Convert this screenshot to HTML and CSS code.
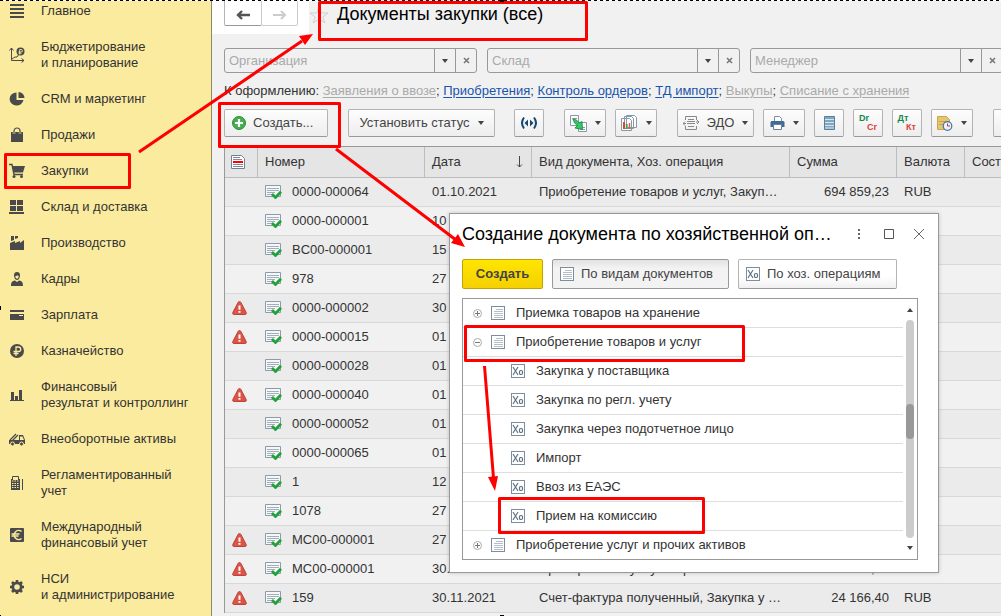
FILE: index.html
```html
<!DOCTYPE html>
<html lang="ru">
<head>
<meta charset="utf-8">
<title>Документы закупки (все)</title>
<link rel="stylesheet" href="styles.css">
</head>
<body>
<svg class="defs" aria-hidden="true">
  <symbol id="doc" viewBox="0 0 14 14"><rect x=".5" y=".5" width="13" height="13" fill="#fff" stroke="#7e8d9c"/><path d="M5 3.500h7M3 5.500h9M3 7.500h9M3 9.500h9M3 11.500h9" stroke="#b3bec8"/></symbol>
  <symbol id="xo" viewBox="0 0 14 14"><rect x=".5" y=".5" width="13" height="13" fill="#fff" stroke="#7e8d9c"/><path d="M2 3l5 8M7 3l-5 8" stroke="#5d7387" stroke-width="1.200"/><rect x="8.500" y="6.500" width="3" height="4" rx="1.200" fill="none" stroke="#5d7387" stroke-width="1.200"/></symbol>
  <symbol id="posted" viewBox="0 0 17 14"><path d="M.5.500h15v11H.5z" fill="#f5f7f8" stroke="#8a9bab"/><path d="M2 3.500h12M2 5.500h12M2 7.500h8M2 9.500h5" stroke="#a3aeb8"/><path d="M7 9l3.500 3.500L16 6.800" fill="none" stroke="#22a03a" stroke-width="2.800"/></symbol>
  <symbol id="warn" viewBox="0 0 15 14"><path d="M7.500.5c.9 0 1.300.7 1.700 1.500l5 9.500c.5 1.200 0 2-1 2H1.800c-1 0-1.500-.8-1-2L5.800 2C6.200 1.200 6.600.5 7.500.5z" fill="#dd5346" stroke="#b9463c"/><path d="M7.500 4.500v4.300M7.500 10v1.800" stroke="#fff" stroke-width="2"/></symbol>
  <symbol id="plus" viewBox="0 0 9 9"><circle cx="4.500" cy="4.500" r="4" fill="#fff" stroke="#aaa"/><path d="M2 4.500h5M4.500 2v5" stroke="#777"/></symbol>
  <symbol id="minus" viewBox="0 0 9 9"><circle cx="4.500" cy="4.500" r="4" fill="#fff" stroke="#aaa"/><path d="M2 4.500h5" stroke="#777"/></symbol>
  <symbol id="drop" viewBox="0 0 6 4"><path d="M0 0h6L3 4z" fill="#444"/></symbol>
  <symbol id="cross" viewBox="0 0 7 7"><path d="M1 1l5 5M6 1L1 6" stroke="#777" stroke-width="1.600"/></symbol>
</svg>

<div class="app">
<nav class="sidebar">
  <a href="#"><svg viewBox="0 0 16 16"><path d="M1 2h14M1 6h14M1 10h14M1 14h14" stroke="#4a4a4a" stroke-width="2"/></svg><span>Главное</span></a>
  <a href="#"><svg viewBox="0 0 16 16"><path d="M2.500 1v12.500H15M.5 3.500l2-2.500 2 2.500M12.500 11.500l2.500 2-2.500 2M3 12l3-2 2 0 2-3" fill="none" stroke="#4a4a4a"/><circle cx="11.500" cy="4.500" r="4" fill="#4a4a4a"/><path d="M10.700 7.500V2.500h1.500a1.200 1.200 0 010 2.500H9.500M9.500 6.200h3" fill="none" stroke="#fbeb9e" stroke-width=".9"/></svg><span>Бюджетирование<br>и планирование</span></a>
  <a href="#"><svg viewBox="0 0 16 16"><path d="M7.500 1.500V9h7a7 6.500 0 11-7-7.500z" fill="#4a4a4a"/><path d="M9.500 1v6h6a6 6 0 00-6-6z" fill="#4a4a4a"/></svg><span>CRM и маркетинг</span></a>
  <a href="#"><svg viewBox="0 0 16 16"><path d="M2 5h12v10H2z" fill="#4a4a4a"/><path d="M5 7V4a3 3 0 016 0v3" fill="none" stroke="#fbeb9e" stroke-width="2.400"/><path d="M5 7V4a3 3 0 016 0v3" fill="none" stroke="#4a4a4a" stroke-width="1.200"/></svg><span>Продажи</span></a>
  <a href="#"><svg viewBox="0 0 16 16"><path d="M0 1.500h3L5 11.500h9" fill="none" stroke="#4a4a4a" stroke-width="1.400"/><path d="M3 3h13l-2 6.500H4.500z" fill="#4a4a4a"/><circle cx="5" cy="13.500" r="1.500" fill="#4a4a4a"/><circle cx="12.500" cy="13.500" r="1.500" fill="#4a4a4a"/></svg><span>Закупки</span></a>
  <a href="#"><svg viewBox="0 0 16 16"><path d="M1 1h6v5H1zM8 1h6v5H8zM1 7h6v5H1zM8 7h6v5H8zM0 13h15v2H0z" fill="#4a4a4a"/></svg><span>Склад и доставка</span></a>
  <a href="#"><svg viewBox="0 0 16 16"><path d="M1 15V8l5-2v2l5-2v2l4-3v10zM2 1h3v4L2 6zM6 1h3v2L6 4z" fill="#4a4a4a"/></svg><span>Производство</span></a>
  <a href="#"><svg viewBox="0 0 16 16"><path d="M2 15c0-4 1-5 4-5.500L8 11l2-1.500c3 .5 4 1.500 4 5.500z" fill="#4a4a4a"/><path d="M5 4.500C5 2 6 1 8 1s3 1 3 3.500S9.500 9 8 9 5 7 5 4.500z" fill="#4a4a4a"/><path d="M6.300 5c1 0 2-.3 2.400-.8.3.5.6.8 1 .8 0 1.500-.7 2.800-1.700 2.800S6.300 6.500 6.300 5z" fill="#fbeb9e"/></svg><span>Кадры</span></a>
  <a href="#"><svg viewBox="0 0 16 16"><path d="M1 3h14v2H1zM1 7h14v6H1z" fill="#4a4a4a"/><path d="M10 8.500h4" stroke="#fbeb9e"/></svg><span>Зарплата</span></a>
  <a href="#"><svg viewBox="0 0 16 16"><circle cx="8" cy="8" r="7" fill="#4a4a4a"/><path d="M7 13V4h2.500a2.200 2.200 0 010 4.500H4.500M4.500 10.500h5" fill="none" stroke="#fbeb9e" stroke-width="1.300"/></svg><span>Казначейство</span></a>
  <a href="#"><svg viewBox="0 0 16 16"><path d="M2 5h3v8H2zM6 9h3v4H6zM10 3h3v10h-3zM1 13h14v1H1z" fill="#4a4a4a"/></svg><span>Финансовый<br>результат и контроллинг</span></a>
  <a href="#"><svg viewBox="0 0 16 16"><path d="M0 9h10V4h4l2 5v4H0z" fill="#4a4a4a"/><path d="M11 5.500h2.500L15 9h-4z" fill="#fbeb9e"/><path d="M1 9l6-6M3 10l6-6" stroke="#4a4a4a" stroke-width="1.300"/><circle cx="3.500" cy="13" r="2" fill="#4a4a4a" stroke="#fbeb9e"/><circle cx="12.500" cy="13" r="2" fill="#4a4a4a" stroke="#fbeb9e"/></svg><span>Внеоборотные активы</span></a>
  <a href="#"><svg viewBox="0 0 16 16"><path d="M2 4h9v11H2zM13 4h1v11h-1z" fill="#4a4a4a"/><path d="M3.500 5V1.500h6V5" fill="#fbeb9e" stroke="#4a4a4a"/><path d="M3 6h7M3 8.500h7M3 10.500h7M3 12.500h7" stroke="#fbeb9e" stroke-dasharray="1.500 1"/></svg><span>Регламентированный<br>учет</span></a>
  <a href="#"><svg viewBox="0 0 16 16"><rect x="1" y="1" width="14" height="14" rx="1" fill="#4a4a4a"/><path d="M12.500 4.500a4.500 4.500 0 100 7M2.500 7h8M2.500 9h7" fill="none" stroke="#fbeb9e" stroke-width="1.500"/></svg><span>Международный<br>финансовый учет</span></a>
  <a href="#"><svg viewBox="0 0 16 16"><circle cx="8" cy="8" r="4.200" fill="none" stroke="#4a4a4a" stroke-width="2.800"/><path d="M8 1v2M8 13v2M1 8h2M13 8h2M3 3l1.500 1.500M11.500 11.500L13 13M13 3l-1.500 1.500M4.500 11.500L3 13" stroke="#4a4a4a" stroke-width="2.600"/></svg><span>НСИ<br>и администрирование</span></a>
</nav>

<main class="main">
  <header class="head">
    <div class="history">
      <button type="button" aria-label="Назад"><svg width="14" height="10" viewBox="0 0 14 10"><path d="M14 5H3M6 1L2 5l4 4" fill="none" stroke="#555" stroke-width="2.400"/></svg></button>
      <button type="button" aria-label="Вперед"><svg width="14" height="10" viewBox="0 0 14 10"><path d="M0 5h11M8 1l4 4-4 4" fill="none" stroke="#ccc" stroke-width="2"/></svg></button>
    </div>
    <svg class="star" viewBox="0 0 20 18"><path d="M10 1l2.300 6H19l-5.300 4L16 17l-6-4-6 4 2.300-6L1 7h6.700z" fill="none" stroke="#d0d0d0"/></svg>
    <h1>Документы закупки (все)</h1>
  </header>

  <div class="filters">
    <div class="combo"><input type="text" placeholder="Организация" aria-label="Организация"><button type="button" aria-label="Выбрать"><svg width="6" height="4"><use href="#drop"/></svg></button><button type="button" aria-label="Очистить"><svg width="7" height="7"><use href="#cross"/></svg></button></div>
    <div class="combo"><input type="text" placeholder="Склад" aria-label="Склад"><button type="button" aria-label="Выбрать"><svg width="6" height="4"><use href="#drop"/></svg></button><button type="button" aria-label="Очистить"><svg width="7" height="7"><use href="#cross"/></svg></button></div>
    <div class="combo"><input type="text" placeholder="Менеджер" aria-label="Менеджер"><button type="button" aria-label="Выбрать"><svg width="6" height="4"><use href="#drop"/></svg></button><button type="button" aria-label="Очистить"><svg width="7" height="7"><use href="#cross"/></svg></button></div>
  </div>

  <p class="links">К оформлению: <a class="off" href="#">Заявления о ввозе</a>; <a href="#">Приобретения</a>; <a href="#">Контроль ордеров</a>; <a href="#">ТД импорт</a>; <a class="off" href="#">Выкупы</a>; <a class="off" href="#">Списание с хранения</a></p>

  <div class="toolbar">
    <button type="button" class="btn create"><svg width="14" height="14" viewBox="0 0 14 14"><circle cx="7" cy="7" r="6.500" fill="#45b050" stroke="#2c8d3b"/><path d="M3 7h8M7 3v8" stroke="#fff" stroke-width="2.200"/></svg>Создать...</button>
    <button type="button" class="btn status">Установить статус<svg width="6" height="4"><use href="#drop"/></svg></button>
    <button type="button" class="btn icon" aria-label="Связи"><svg width="16" height="14" viewBox="0 0 16 14"><path d="M3 1.500q-4 5.500 0 11M13 1.500q4 5.500 0 11" fill="none" stroke="#17496f" stroke-width="2"/><path d="M7 3.500v7L3.500 7zM9 3.500v7L12.500 7z" fill="#17496f"/></svg></button>
    <button type="button" class="btn pair start" aria-label="Создать на основании"><svg width="17" height="17" viewBox="0 0 17 17"><path d="M.5.500h8v10h-8zM8.500 7.500h8v9h-8z" fill="#fff" stroke="#8899a8"/><path d="M2 3.500h5M10 12.500h5M10 14.500h5" stroke="#8899a8"/><path d="M3 4l3.500 1L9 8l3-1.500.5 8L5 13l2.500-2.500L4.500 8z" fill="#2fcb62" stroke="#16823a" stroke-width=".8"/></svg><svg width="6" height="4"><use href="#drop"/></svg></button>
    <button type="button" class="btn pair" aria-label="Отчеты"><svg width="17" height="16" viewBox="0 0 17 16"><path d="M5.500.5h8l2 2v10h-10zM3.500 1.500h7l2 2v10h-9zM.5 3.500h8l2 2v10H.5z" fill="#fff" stroke="#8297a8"/><path d="M3 7v7" stroke="#d43" stroke-width="2"/><path d="M5.700 9v5" stroke="#3a6" stroke-width="2"/><path d="M8.500 8v6" stroke="#e54" stroke-width="1.500"/></svg><svg width="6" height="4"><use href="#drop"/></svg></button>
    <button type="button" class="btn edo start"><svg width="16" height="14" viewBox="0 0 16 14"><path d="M2.500 4V.5h11V4M2.500 10v3.500h11V10M5 3.500h6M4 5.500h8M4 7.500h8M5 10.500h6M0 7.500h3M13 6h3M14 4l2 2-2 2M2 5.500l-2 2 2 2" fill="none" stroke="#888"/></svg>ЭДО<svg width="6" height="4"><use href="#drop"/></svg></button>
    <button type="button" class="btn pair" aria-label="Печать"><svg width="15" height="14" viewBox="0 0 15 14"><path d="M4.500.5h5l2 2V6h-7z" fill="#fff" stroke="#7890a5"/><path d="M1.500 5h12l1 1v5H.5V6z" fill="#3f6d92"/><path d="M3.500 8.500h8v5h-8z" fill="#fff" stroke="#6a8299"/></svg><svg width="6" height="4"><use href="#drop"/></svg></button>
    <button type="button" class="btn icon" aria-label="Список"><svg width="11" height="14" viewBox="0 0 11 14"><path d="M.5.500h10v13H.5z" fill="#83a7c1" stroke="#58809d"/><path d="M1 3.500h9M1 6.500h9M1 9.500h9M1 12h9" stroke="#d5e3ed"/></svg></button>
    <button type="button" class="btn icon pairtext" aria-label="Dr Cr"><b>Dr</b><i>Cr</i></button>
    <button type="button" class="btn icon pairtext" aria-label="Дт Кт"><b>Дт</b><i>Кт</i></button>
    <button type="button" class="btn pair" aria-label="Напоминание"><svg width="16" height="15" viewBox="0 0 16 15"><path d="M.5.500h9l3 3v10H.5z" fill="#e6c56f" stroke="#cba64c"/><path d="M2 5.500h8M2 8.500h5" stroke="#c6a04b"/><circle cx="10.500" cy="10" r="4.300" fill="#e9f1fa" stroke="#4275a8" stroke-width="1.200"/><path d="M10.500 7.500V10H13" fill="none" stroke="#c33"/></svg><svg width="6" height="4"><use href="#drop"/></svg></button>
    <button type="button" class="btn icon start" aria-label="Еще"></button>
  </div>

  <div class="grid">
  <table>
    <colgroup><col class="c-flag"><col class="c-num"><col class="c-date"><col class="c-kind"><col class="c-sum"><col class="c-cur"><col></colgroup>
    <thead><tr>
      <th><svg width="14" height="14" viewBox="0 0 14 14"><path d="M.5.500h10l3 3v10H.5z" fill="#fff" stroke="#6e8294"/><path d="M2 2.500h7M2 4.500h9M2 9.500h10M2 11.500h10" stroke="#7c8c99"/><path d="M2 7h10" stroke="#f00" stroke-width="2"/></svg></th>
      <th>Номер</th>
      <th><span class="sorted">Дата<svg width="7" height="12" viewBox="0 0 7 12"><path d="M3.500 0v11M1 8.500l2.500 2.500L6 8.500" fill="none" stroke="#444"/></svg></span></th>
      <th>Вид документа, Хоз. операция</th><th>Сумма</th><th>Валюта</th><th>Сост</th>
    </tr></thead>
    <tbody>
      <tr><td></td><td><span class="num"><svg class="mark"><use href="#posted"/></svg>0000-000064</span></td><td>01.10.2021</td><td>Приобретение товаров и услуг, Закуп…</td><td>694 859,23</td><td>RUB</td><td></td></tr>
      <tr><td></td><td><span class="num"><svg class="mark"><use href="#posted"/></svg>0000-000001</span></td><td>10</td><td></td><td></td><td></td><td></td></tr>
      <tr><td></td><td><span class="num"><svg class="mark"><use href="#posted"/></svg>BC00-000001</span></td><td>15</td><td></td><td></td><td></td><td></td></tr>
      <tr><td></td><td><span class="num"><svg class="mark"><use href="#posted"/></svg>978</span></td><td>27</td><td></td><td></td><td></td><td></td></tr>
      <tr><td><svg class="warn"><use href="#warn"/></svg></td><td><span class="num"><svg class="mark"><use href="#posted"/></svg>0000-000002</span></td><td>30</td><td></td><td></td><td></td><td></td></tr>
      <tr><td><svg class="warn"><use href="#warn"/></svg></td><td><span class="num"><svg class="mark"><use href="#posted"/></svg>0000-000015</span></td><td>01</td><td></td><td></td><td></td><td></td></tr>
      <tr><td></td><td><span class="num"><svg class="mark"><use href="#posted"/></svg>0000-000028</span></td><td>01</td><td></td><td></td><td></td><td></td></tr>
      <tr><td><svg class="warn"><use href="#warn"/></svg></td><td><span class="num"><svg class="mark"><use href="#posted"/></svg>0000-000040</span></td><td>01</td><td></td><td></td><td></td><td></td></tr>
      <tr><td></td><td><span class="num"><svg class="mark"><use href="#posted"/></svg>0000-000052</span></td><td>01</td><td></td><td></td><td></td><td></td></tr>
      <tr><td></td><td><span class="num"><svg class="mark"><use href="#posted"/></svg>0000-000065</span></td><td>01</td><td></td><td></td><td></td><td></td></tr>
      <tr><td></td><td><span class="num"><svg class="mark"><use href="#posted"/></svg>1</span></td><td>12</td><td></td><td></td><td></td><td></td></tr>
      <tr><td></td><td><span class="num"><svg class="mark"><use href="#posted"/></svg>1078</span></td><td>27</td><td></td><td></td><td></td><td></td></tr>
      <tr><td><svg class="warn"><use href="#warn"/></svg></td><td><span class="num"><svg class="mark"><use href="#posted"/></svg>МС00-000001</span></td><td>27</td><td></td><td></td><td></td><td></td></tr>
      <tr><td><svg class="warn"><use href="#warn"/></svg></td><td><span class="num"><svg class="mark"><use href="#posted"/></svg>МС00-000001</span></td><td>30.11.2021</td><td>Приобретение услуг и прочих активо…</td><td>2 800,00</td><td>RUB</td><td></td></tr>
      <tr><td><svg class="warn"><use href="#warn"/></svg></td><td><span class="num"><svg class="mark"><use href="#posted"/></svg>159</span></td><td>30.11.2021</td><td>Счет-фактура полученный, Закупка у …</td><td>24 166,40</td><td>RUB</td><td></td></tr>
    </tbody>
  </table>
  </div>

  <section class="dialog" role="dialog" aria-labelledby="dlg-title">
    <div class="dialog-head">
      <h2 id="dlg-title">Создание документа по хозяйственной оп…</h2>
      <button type="button" aria-label="Меню"><svg width="10" height="10" viewBox="0 0 10 10"><path d="M4 0h2v2H4zM4 4h2v2H4zM4 8h2v2H4z" fill="#666"/></svg></button>
      <button type="button" aria-label="Развернуть"><svg width="10" height="10" viewBox="0 0 10 10"><path d="M.5.500h9v9h-9z" fill="none" stroke="#555"/></svg></button>
      <button type="button" aria-label="Закрыть"><svg width="10" height="10" viewBox="0 0 10 10"><path d="M0 0l10 10M10 0L0 10" stroke="#666"/></svg></button>
    </div>
    <div class="dialog-bar">
      <button type="button" class="btn primary">Создать</button>
      <button type="button" class="btn pressed"><svg width="14" height="14"><use href="#doc"/></svg>По видам документов</button>
      <button type="button" class="btn byop"><svg width="14" height="14"><use href="#xo"/></svg>По хоз. операциям</button>
    </div>
    <div class="tree">
      <ul>
        <li><svg class="knob"><use href="#plus"/></svg><svg class="ico"><use href="#doc"/></svg>Приемка товаров на хранение</li>
        <li><svg class="knob"><use href="#minus"/></svg><svg class="ico"><use href="#doc"/></svg>Приобретение товаров и услуг</li>
        <li class="sub"><svg class="ico"><use href="#xo"/></svg>Закупка у поставщика</li>
        <li class="sub"><svg class="ico"><use href="#xo"/></svg>Закупка по регл. учету</li>
        <li class="sub"><svg class="ico"><use href="#xo"/></svg>Закупка через подотчетное лицо</li>
        <li class="sub"><svg class="ico"><use href="#xo"/></svg>Импорт</li>
        <li class="sub"><svg class="ico"><use href="#xo"/></svg>Ввоз из ЕАЭС</li>
        <li class="sub"><svg class="ico"><use href="#xo"/></svg>Прием на комиссию</li>
        <li><svg class="knob"><use href="#plus"/></svg><svg class="ico"><use href="#doc"/></svg>Приобретение услуг и прочих активов</li>
      </ul>
      <div class="scroll">
        <svg width="6" height="4" viewBox="0 0 6 4"><path d="M0 4h6L3 0z" fill="#444"/></svg>
        <div class="track"><div class="thumb"></div></div>
        <svg width="6" height="4"><use href="#drop"/></svg>
      </div>
    </div>
  </section>
</main>
</div>

<svg class="notes" aria-hidden="true">
  <path d="M0 .5h1001" stroke="#fff"/>
  <path d="M0 .5h1001" stroke="#000" stroke-dasharray="3 3"/>
  <g fill="none" stroke="#f00" stroke-width="3" stroke-linejoin="round">
    <rect x="5.500" y="154.500" width="124" height="33"/>
    <rect x="319.500" y="2.500" width="267" height="37"/>
    <rect x="219.500" y="103.500" width="120" height="43"/>
    <rect x="465.500" y="326.500" width="278" height="34"/>
    <rect x="499.500" y="498.500" width="204" height="34"/>
  </g>
  <path d="M139 152L302 41M336 149l120 91M484.500 366l9 112" fill="none" stroke="#f00" stroke-width="3"/>
  <path d="M313 34l-8 11-6-9zM465 247l-14-4 7-9zM495 491l-7-14 10-1z" fill="#f00"/>
  <path d="M500 0h4v2h-4zM0 306h1v4H0zM500 615h4v1h-4zM0 615h1v1H0z"/>
</svg>
</body>
</html>
```
FILE: styles.css
```css
* { box-sizing: border-box; }

body {
  margin: 0;
  overflow: hidden;
  background: #f1f1f1;
  color: #333;
  font: 13px/16px "Liberation Sans", Arial, sans-serif;
}

button, input { font: inherit; color: inherit; margin: 0; }
button { cursor: pointer; }
svg { flex: none; }
.defs { position: absolute; width: 0; height: 0; }

.app { display: flex; height: 100vh; overflow: hidden; }

.sidebar {
  flex: none;
  width: 212px;
  overflow: hidden;
  background: #fbeb9e;
  border-right: 1px solid #8f8a62;
}
.sidebar a {
  display: flex;
  align-items: center;
  gap: 16px;
  padding: 10px 8px 10px 9px;
  color: #333;
  text-decoration: none;
  white-space: nowrap;
}
.sidebar a:first-child { padding-top: 3px; }
.sidebar svg { width: 16px; height: 16px; }

.main {
  position: relative;
  flex: 1;
  min-width: 0;
  overflow: hidden;
}

.head { display: flex; height: 34px; }
.history {
  display: flex;
  align-items: flex-start;
  width: 97px;
  padding-left: 12px;
  background: #fff;
}
.history button {
  display: flex;
  align-items: center;
  justify-content: center;
  width: 38px;
  height: 26px;
  padding: 4px 0 0;
  background: #fff;
  border: 1px solid #b5b5b5;
  border-bottom-color: #999;
  border-radius: 0 0 2px 2px;
}
.history button + button { width: 37px; margin-left: -1px; border-color: #ccc; }
.star { width: 20px; height: 18px; margin: 6px 8px 0 0; }
h1, h2 { margin: 0; color: #000; font-weight: normal; font-size: 18px; line-height: 24px; white-space: nowrap; }
h1 { padding-top: 2px; }

.filters { display: flex; gap: 10px; padding: 14px 0 0 12px; }
.combo {
  display: flex;
  flex: none;
  width: 253px;
  height: 25px;
  border: 1px solid #999;
  border-radius: 3px;
}
.combo input {
  flex: 1;
  min-width: 0;
  padding: 0 4px;
  border: 0;
  background: none;
}
.combo input::placeholder { color: #aaa; opacity: 1; }
.combo button {
  display: flex;
  align-items: center;
  justify-content: center;
  width: 21px;
  padding: 0;
  border: 0;
  border-left: 1px solid #999;
  background: none;
}

.links { margin: 0; padding: 10px 0 10px 12px; white-space: nowrap; }
.links a { color: #1a54ad; text-underline-offset: 2px; }
.links .off { color: #aaa; }

.toolbar { display: flex; gap: 9px; padding: 0 0 9px 12px; }
.btn {
  display: flex;
  flex: none;
  align-items: center;
  justify-content: center;
  gap: 8px;
  height: 28px;
  padding: 0;
  color: #444;
  background: linear-gradient(#fdfdfd, #ededed);
  border: 1px solid #b3b3b3;
  border-bottom-color: #999;
  border-radius: 2px;
  white-space: nowrap;
}
.create, .pressed, .byop { justify-content: flex-start; gap: 7px; padding: 0 7px; }
.create { width: 104px; }
.status { width: 147px; margin: 0 10px 0 11px; }
.icon { width: 30px; }
.pair { width: 42px; }
.edo { width: 77px; }
.start { margin-left: 11px; }
.pairtext {
  flex-direction: column;
  gap: 0;
  font-size: 9px;
  line-height: 9px;
}
.pairtext b { padding-right: 8px; color: #12894a; }
.pairtext i { padding-left: 8px; color: #d9413c; font-style: normal; font-weight: bold; }

.grid { margin-left: 12px; border-top: 1px solid #999; border-left: 1px solid #999; }
table { width: 100%; table-layout: fixed; border-collapse: separate; border-spacing: 0; }
.c-flag { width: 33px; }
.c-num { width: 167px; }
.c-date { width: 107px; }
.c-kind { width: 258px; }
.c-sum { width: 107px; }
.c-cur { width: 68px; }
th, td {
  padding: 0 8px 0 7px;
  text-align: left;
  font-weight: normal;
  white-space: nowrap;
}
th {
  height: 31px;
  background: #e5e5e5;
  border-right: 1px solid #bdbdbd;
  border-bottom: 1px solid #bdbdbd;
}
th:last-child { padding-right: 0; border-right: 0; }
td { height: 29px; border-bottom: 1px solid #d8d8d8; }
tbody tr:nth-child(odd) { background: #ebebeb; }
th svg, td svg { display: block; }
th:first-child { padding-left: 6px; }
td:nth-child(5) { text-align: right; }
.num { display: flex; align-items: center; gap: 10px; }
.sorted { display: flex; justify-content: space-between; align-items: center; }
.mark { width: 17px; height: 14px; }
.warn { width: 15px; height: 14px; }

.dialog {
  position: absolute;
  left: 237px;
  top: 213px;
  width: 490px;
  padding: 0 20px 12px 12px;
  background: #fff;
  border: 1px solid #999;
  box-shadow: 0 0 4px rgba(0, 0, 0, .2);
}
.dialog-head { display: flex; align-items: center; height: 45px; margin-right: -16px; padding-bottom: 6px; }
.dialog-head h2 { flex: 1; }
.dialog-head button {
  display: flex;
  align-items: center;
  justify-content: center;
  width: 30px;
  height: 24px;
  padding: 0;
  border: 0;
  background: none;
}
.dialog-bar { display: flex; gap: 9px; }
.dialog-bar .btn { height: 30px; }
.dialog-bar .primary {
  width: 81px;
  color: #444;
  font-weight: bold;
  background: linear-gradient(#ffe500, #f5d000);
  border-color: #bfa30a;
}
.dialog-bar .pressed { width: 177px; background: linear-gradient(#e2e2e2, #f3f3f3 30%); border-color: #999; }
.dialog-bar .byop { width: 159px; background: linear-gradient(#fff 60%, #f0f0f0); }

.tree {
  display: flex;
  justify-content: space-between;
  margin-top: 9px;
  border: 1px solid #999;
}
.tree ul { flex: 1; margin: 0; padding: 0; list-style: none; }
.tree li {
  display: flex;
  align-items: center;
  height: 29px;
  padding-left: 10px;
  border-bottom: 1px solid #ddd;
}
.tree li:last-child { height: 28px; border-bottom: 0; }
.tree .sub { padding-left: 48px; }
.knob { width: 9px; height: 9px; margin-right: 9px; }
.ico { width: 14px; height: 14px; margin-right: 11px; }
.scroll {
  display: flex;
  flex-direction: column;
  align-items: center;
  gap: 8px;
  width: 14px;
  padding: 9px 0;
}
.track { flex: 1; width: 8px; padding-top: 84px; background: #ccc; border-radius: 4px; }
.thumb { height: 35px; background: #999; border-radius: 4px; }

.notes { position: fixed; inset: 0; width: 100%; height: 100%; pointer-events: none; }
```
